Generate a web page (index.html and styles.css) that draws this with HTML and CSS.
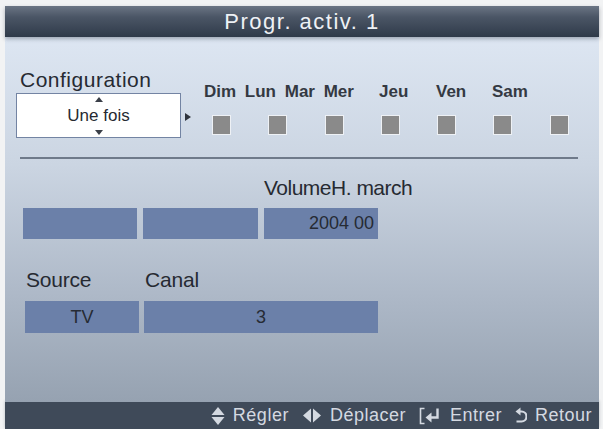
FILE: index.html
```html
<!DOCTYPE html>
<html lang="fr">
<head>
<meta charset="utf-8">
<title>Progr. activ. 1</title>
<link rel="stylesheet" href="styles.css">
</head>
<body>
<div class="screen">
  <div class="header"><span class="title">Progr. activ. 1</span></div>
  <div class="content">
    <div class="config-row">
      <div class="config-left">
        <div class="label config-label">Configuration</div>
        <div class="select">
          <span class="tri tri-up"></span>
          <span class="select-value">Une fois</span>
          <span class="tri tri-down"></span>
        </div>
      </div>
      <span class="tri-right"></span>
      <div class="days">
        <div class="day-labels">
          <span class="dl dl-first">Dim Lun Mar Mer</span>
          <span class="dl dl-jeu">Jeu</span>
          <span class="dl dl-ven">Ven</span>
          <span class="dl">Sam</span>
        </div>
        <div class="checks">
          <span class="check"></span><span class="check"></span><span class="check"></span><span class="check"></span><span class="check"></span><span class="check"></span><span class="check"></span>
        </div>
      </div>
    </div>
    <div class="divider"></div>
    <div class="label vol-label">VolumeH. march</div>
    <div class="field-row row-a">
      <div class="field w114"></div>
      <div class="field w115"></div>
      <div class="field w114 right">2004 00</div>
    </div>
    <div class="labels-b">
      <span class="label src-label">Source</span>
      <span class="label">Canal</span>
    </div>
    <div class="field-row row-b">
      <div class="field w114 center">TV</div>
      <div class="field w234 center">3</div>
    </div>
  </div>
  <div class="footer">
    <span class="hint">
      <svg class="ico" width="14" height="20" viewBox="0 0 14 20"><path d="M7 1 L13.5 9 H0.5 Z M0.5 11 H13.5 L7 19 Z" fill="#d4d9e1"/></svg>
      Régler
    </span>
    <span class="hint">
      <svg class="ico" width="20" height="15" viewBox="0 0 20 15"><path d="M9 0.5 V14.5 L1 7.5 Z M11 0.5 V14.5 L19 7.5 Z" fill="#d4d9e1"/></svg>
      Déplacer
    </span>
    <span class="hint">
      <svg class="ico" width="23" height="18" viewBox="0 0 23 18"><path d="M5.5 1.5 H1.5 V16.5 H5.5" fill="none" stroke="#d4d9e1" stroke-width="1.6"/><path d="M18.5 1.5 V10.5 H11" fill="none" stroke="#d4d9e1" stroke-width="2.4"/><path d="M6.5 10.5 L12.5 5.5 V15.5 Z" fill="#d4d9e1"/></svg>
      Entrer
    </span>
    <span class="hint">
      <svg class="ico" width="12" height="18" viewBox="0 0 12 18"><path d="M4.5 4.5 H6.5 A5 5 0 0 1 6.5 14.5 H1.5" fill="none" stroke="#d4d9e1" stroke-width="2.2"/><path d="M0.5 4.5 L5.5 0.5 V8.5 Z" fill="#d4d9e1"/></svg>
      Retour
    </span>
  </div>
</div>
</body>
</html>
```

FILE: styles.css
```css
html, body {
  margin: 0;
  padding: 0;
  background: #f2f3f4;
}
body {
  font-family: "Liberation Sans", Arial, sans-serif;
  color: #262a32;
}
.screen {
  margin: 6px 4px 0 5px;
  height: 423px;
  display: flex;
  flex-direction: column;
}
.header {
  height: 31px;
  background: linear-gradient(#6b7584 0%, #4b5666 35%, #2f3a49 100%);
  display: flex;
  align-items: center;
  justify-content: center;
  box-shadow: 0 2px 4px rgba(40, 50, 65, 0.35);
  position: relative;
  z-index: 1;
}
.title {
  color: #eef1f5;
  font-size: 22px;
  letter-spacing: 1.5px;
  line-height: 31px;
}
.content {
  flex: 1;
  background: linear-gradient(#dde6f2 0%, #cbd5e2 35%, #aeb9c8 70%, #96a2b1 100%);
  padding: 31px 0 0 0;
  position: relative;
}
.label {
  font-size: 21px;
  line-height: 24px;
  letter-spacing: -0.2px;
}
.config-row {
  display: flex;
  align-items: flex-start;
}
.config-left {
  display: flex;
  flex-direction: column;
  margin-left: 11px;
}
.config-label {
  margin-left: 4px;
  letter-spacing: 0.5px;
}
.select {
  margin-top: 1px;
  width: 163px;
  background: #ffffff;
  border: 1.5px solid #7384a3;
  display: flex;
  flex-direction: column;
  align-items: center;
  justify-content: space-between;
  padding: 3px 0 2px;
  box-sizing: content-box;
  height: 38px;
}
.tri {
  width: 0;
  height: 0;
  border-left: 4px solid transparent;
  border-right: 4px solid transparent;
}
.tri-up { border-bottom: 5px solid #3a3f48; }
.tri-down { border-top: 5px solid #3a3f48; }
.select-value {
  font-size: 17px;
  line-height: 20px;
}
.tri-right {
  width: 0;
  height: 0;
  border-top: 4px solid transparent;
  border-bottom: 4px solid transparent;
  border-left: 6px solid #2f343d;
  margin: 45px 0 0 4px;
}
.days {
  margin-left: 13px;
  margin-top: 14px;
}
.day-labels {
  display: flex;
  font-size: 17px;
  line-height: 20px;
  font-weight: bold;
  color: #343942;
}
.dl-first { width: 175px; word-spacing: 4px; }
.dl-jeu { width: 57px; }
.dl-ven { width: 56px; }
.checks {
  display: flex;
  gap: 37.3px;
  margin: 13px 0 0 8px;
}
.check {
  width: 17px;
  height: 18px;
  background: #8a8a8a;
  border: 1px solid #eef1f5;
}
.divider {
  margin: 19px 21px 0 15px;
  height: 1.5px;
  background: #6f7a8a;
}
.vol-label {
  margin: 17px 0 0 259px;
  letter-spacing: -0.5px;
}
.field-row {
  display: flex;
}
.row-a {
  margin: 8px 0 0 18px;
  gap: 6px;
}
.field {
  height: 31px;
  background: #6b80a9;
  font-size: 18px;
  line-height: 31px;
  color: #262b34;
  box-sizing: border-box;
}
.w114 { width: 114px; }
.w115 { width: 115px; }
.w234 { width: 234px; }
.right { text-align: right; padding-right: 4px; }
.center { text-align: center; }
.labels-b {
  display: flex;
  margin: 29px 0 0 21px;
}
.src-label { width: 119px; }
.row-b {
  margin: 9px 0 0 20px;
  gap: 5px;
}
.row-b .field { height: 32px; line-height: 32px; }
.footer {
  height: 27px;
  background: #3f4a59;
  display: flex;
  align-items: center;
  justify-content: flex-end;
  padding-right: 7px;
  gap: 13px;
  color: #d4d9e1;
  font-size: 18px;
  letter-spacing: 0.5px;
  box-shadow: 0 -1px 3px rgba(60, 70, 85, 0.3);
}
.hint {
  display: flex;
  align-items: center;
  gap: 8px;
}
.ico { display: block; }
```
